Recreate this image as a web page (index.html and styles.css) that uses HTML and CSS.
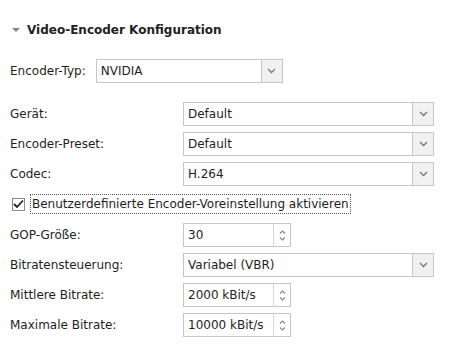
FILE: index.html
```html
<!DOCTYPE html>
<html lang="de">
<head>
    <meta charset="UTF-8">
    <title>Video-Encoder Konfiguration</title>
    <link rel="stylesheet" href="styles.css">
</head>
<body>
    <div class="panel">
        <div class="section-title">
            <span class="caret"></span>
            <span>Video-Encoder Konfiguration</span>
        </div>

        <div class="type-row">
            <span class="label">Encoder-Typ:</span>
            <div class="combo combo-type">
                <span class="value">NVIDIA</span>
                <span class="drop"><svg width="9" height="6" viewBox="0 0 9 6"><path d="M1 1 L4.5 4.5 L8 1" fill="none" stroke="#777" stroke-width="1.3"/></svg></span>
            </div>
        </div>

        <div class="rows">
            <div class="row">
                <span class="label">Gerät:</span>
                <div class="combo combo-wide">
                    <span class="value">Default</span>
                    <span class="drop"><svg width="9" height="6" viewBox="0 0 9 6"><path d="M1 1 L4.5 4.5 L8 1" fill="none" stroke="#777" stroke-width="1.3"/></svg></span>
                </div>
            </div>
            <div class="row">
                <span class="label">Encoder-Preset:</span>
                <div class="combo combo-wide">
                    <span class="value">Default</span>
                    <span class="drop"><svg width="9" height="6" viewBox="0 0 9 6"><path d="M1 1 L4.5 4.5 L8 1" fill="none" stroke="#777" stroke-width="1.3"/></svg></span>
                </div>
            </div>
            <div class="row">
                <span class="label">Codec:</span>
                <div class="combo combo-wide">
                    <span class="value">H.264</span>
                    <span class="drop"><svg width="9" height="6" viewBox="0 0 9 6"><path d="M1 1 L4.5 4.5 L8 1" fill="none" stroke="#777" stroke-width="1.3"/></svg></span>
                </div>
            </div>

            <div class="check-row">
                <span class="checkbox"><svg width="11" height="10" viewBox="0 0 11 10"><path d="M1 5 L4 8 L10 1.5" fill="none" stroke="#222" stroke-width="1.8"/></svg></span>
                <span class="check-label">Benutzerdefinierte Encoder-Voreinstellung aktivieren</span>
            </div>

            <div class="row">
                <span class="label">GOP-Größe:</span>
                <div class="spin">
                    <span class="value">30</span>
                    <span class="spin-btn">
                        <svg width="7" height="4" viewBox="0 0 7 4"><path d="M1 3.5 L3.5 1 L6 3.5" fill="none" stroke="#888" stroke-width="1.2"/></svg>
                        <svg width="7" height="4" viewBox="0 0 7 4"><path d="M1 0.5 L3.5 3 L6 0.5" fill="none" stroke="#888" stroke-width="1.2"/></svg>
                    </span>
                </div>
            </div>
            <div class="row">
                <span class="label">Bitratensteuerung:</span>
                <div class="combo combo-wide">
                    <span class="value">Variabel (VBR)</span>
                    <span class="drop"><svg width="9" height="6" viewBox="0 0 9 6"><path d="M1 1 L4.5 4.5 L8 1" fill="none" stroke="#777" stroke-width="1.3"/></svg></span>
                </div>
            </div>
            <div class="row">
                <span class="label">Mittlere Bitrate:</span>
                <div class="spin">
                    <span class="value">2000 kBit/s</span>
                    <span class="spin-btn">
                        <svg width="7" height="4" viewBox="0 0 7 4"><path d="M1 3.5 L3.5 1 L6 3.5" fill="none" stroke="#888" stroke-width="1.2"/></svg>
                        <svg width="7" height="4" viewBox="0 0 7 4"><path d="M1 0.5 L3.5 3 L6 0.5" fill="none" stroke="#888" stroke-width="1.2"/></svg>
                    </span>
                </div>
            </div>
            <div class="row">
                <span class="label">Maximale Bitrate:</span>
                <div class="spin">
                    <span class="value">10000 kBit/s</span>
                    <span class="spin-btn">
                        <svg width="7" height="4" viewBox="0 0 7 4"><path d="M1 3.5 L3.5 1 L6 3.5" fill="none" stroke="#888" stroke-width="1.2"/></svg>
                        <svg width="7" height="4" viewBox="0 0 7 4"><path d="M1 0.5 L3.5 3 L6 0.5" fill="none" stroke="#888" stroke-width="1.2"/></svg>
                    </span>
                </div>
            </div>
        </div>
    </div>
</body>
</html>
```

FILE: styles.css
```css
body {
    margin: 0;
    background: #fff;
    font-family: "DejaVu Sans", "Noto Sans", sans-serif;
    font-size: 12px;
    color: #1e1e1e;
}

.panel {
    width: 455px;
    height: 344px;
    padding: 0 0 0 10px;
    box-sizing: border-box;
    overflow: hidden;
}

.section-title {
    display: flex;
    align-items: center;
    gap: 7px;
    height: 16px;
    margin-top: 22px;
    font-weight: bold;
    font-size: 12px;
    color: #222;
}

.caret {
    width: 0;
    height: 0;
    margin-left: 2px;
    border-left: 4px solid transparent;
    border-right: 4px solid transparent;
    border-top: 4px solid #888;
}

.type-row {
    display: flex;
    align-items: center;
    gap: 10px;
    margin-top: 21px;
}

.rows {
    display: flex;
    flex-direction: column;
    gap: 6px;
    margin-top: 19px;
}

.row {
    display: flex;
    align-items: center;
}

.row .label {
    width: 173px;
}

.combo,
.spin {
    display: flex;
    align-items: stretch;
    height: 24px;
    box-sizing: border-box;
    border: 1px solid #c6c6c6;
    background: #fff;
}

.combo-type {
    width: 187px;
}

.combo-wide {
    width: 251px;
}

.spin {
    width: 108px;
}

.value {
    flex: 1;
    display: flex;
    align-items: center;
    padding-left: 4px;
}

.drop {
    width: 20px;
    display: flex;
    align-items: center;
    justify-content: center;
    border-left: 1px solid #c6c6c6;
    background: #f1f1f1;
}

.spin-btn {
    width: 16px;
    display: flex;
    flex-direction: column;
    align-items: center;
    justify-content: center;
    gap: 3px;
    border-left: 1px solid #d6d6d6;
}

.check-row {
    display: flex;
    align-items: center;
    gap: 5px;
    height: 20px;
    margin: 2px 0 3px;
    padding-left: 2px;
}

.checkbox {
    width: 13px;
    height: 13px;
    box-sizing: border-box;
    border: 1px solid #8a8a8a;
    display: flex;
    align-items: center;
    justify-content: center;
    background: #fff;
}

.check-label {
    border: 1px dotted #555;
    padding: 2px 1px;
}
```
